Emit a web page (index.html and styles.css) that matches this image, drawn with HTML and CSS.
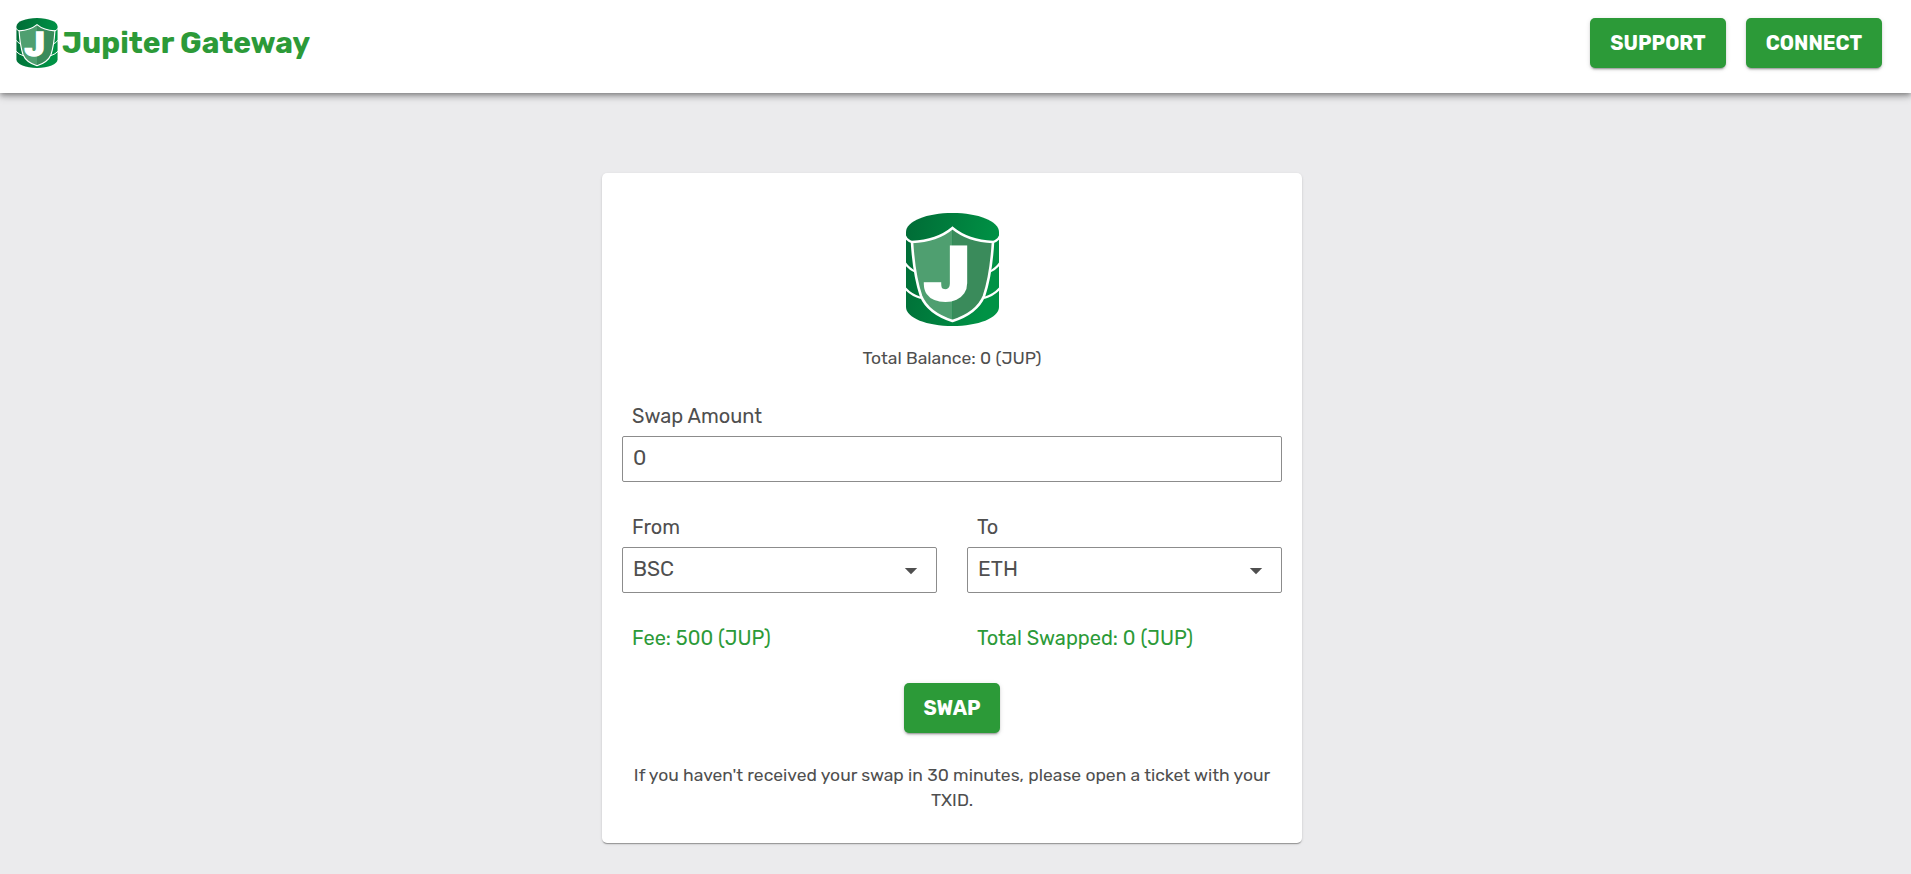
FILE: index.html
```html
<!DOCTYPE html>
<html lang="en">
<head>
<meta charset="utf-8">
<title>Jupiter Gateway</title>
<link rel="stylesheet" href="styles.css">
</head>
<body>
<svg class="defs" width="0" height="0" aria-hidden="true">
  <defs>
    <linearGradient id="barrel" x1="0" y1="0" x2="1" y2="0.25">
      <stop offset="0" stop-color="#006b36"/>
      <stop offset="1" stop-color="#009245"/>
    </linearGradient>
    <symbol id="logo" viewBox="0 0 93 113">
      <path fill="url(#barrel)" d="M0 19C0 8 21 0 46.500 0S93 8 93 19V94C93 105 72 113 46.500 113S0 105 0 94Z"/>
      <g fill="none" stroke="#fff" stroke-width="2.200">
        <path d="M-1 23Q1 28 8 30M-1 50Q3 56 10 59M-1 75Q5 82 15 85"/>
        <path d="M94 23Q92 28 85 30M94 50Q90 56 83 59M94 75Q88 82 78 85"/>
      </g>
      <path fill="#4f9f70" d="M46.500 15Q31 28 6 29Q8 62 15 83Q22 100 46.500 108Z"/>
      <path fill="#3a8b5b" d="M46.500 15Q62 28 87 29Q85 62 78 83Q71 100 46.500 108Z"/>
      <path fill="none" stroke="#fff" stroke-width="2.600" d="M46.500 15Q31 28 6 29Q8 62 15 83Q22 100 46.500 108Q71 100 78 83Q85 62 87 29Q62 28 46.500 15Z"/>
      <text class="logo-letter" transform="translate(18 87) scale(1.090 1)" x="0" y="0">J</text>
    </symbol>
  </defs>
</svg>

<header class="header">
  <div class="brand">
    <svg class="brand-logo"><use href="#logo"/></svg>
    <span class="brand-name">Jupiter Gateway</span>
  </div>
  <nav class="actions">
    <button class="btn btn-nav">Support</button>
    <button class="btn btn-nav">Connect</button>
  </nav>
</header>

<main class="card">
  <svg class="card-logo"><use href="#logo"/></svg>
  <p class="balance">Total Balance: 0 (JUP)</p>
  <div class="field">
    <label class="label">Swap Amount</label>
    <div class="control">0</div>
  </div>
  <div class="row">
    <div class="field">
      <label class="label">From</label>
      <div class="control"><span>BSC</span><svg class="arrow" viewBox="0 0 24 24"><path d="M5.800 9h12.400L12 15.200Z"/></svg></div>
    </div>
    <div class="field">
      <label class="label">To</label>
      <div class="control"><span>ETH</span><svg class="arrow" viewBox="0 0 24 24"><path d="M5.800 9h12.400L12 15.200Z"/></svg></div>
    </div>
  </div>
  <div class="row">
    <p class="total">Fee: 500 (JUP)</p>
    <p class="total">Total Swapped: 0 (JUP)</p>
  </div>
  <button class="btn btn-swap">Swap</button>
  <p class="note">If you haven't received your swap in 30 minutes, please open a ticket with your<br>TXID.</p>
</main>
</body>
</html>
```
FILE: styles.css
```css
* { box-sizing: border-box; }
body {
  margin: 0;
  min-height: 874px;
  background: #ebebed;
  color: #4f4f4f;
  font-family: Rubik, Roboto, sans-serif;
  overflow: hidden;
}
p { margin: 0; }
.defs { display: block; height: 0; }
.header {
  display: flex;
  justify-content: space-between;
  align-items: flex-start;
  height: 93px;
  padding: 18px 29px 0 16px;
  background: #fff;
  box-shadow: 0 2px 4px -1px rgba(0,0,0,.2), 0 4px 5px rgba(0,0,0,.14), 0 1px 10px rgba(0,0,0,.3);
}
.brand { display: flex; align-items: center; gap: 4px; height: 50px; }
.brand-logo { width: 42px; height: 50px; }
.brand-name {
  color: #2c9a38;
  font-size: 30px;
  font-weight: 700;
  white-space: nowrap;
}
.actions { display: flex; gap: 20px; }
.logo-letter {
  fill: #fff;
  stroke: #fff;
  stroke-width: 3px;
  font: 900 75px Roboto, sans-serif;
}
.btn {
  height: 50px;
  padding: 0;
  border: 0;
  border-radius: 5px;
  background: #2c9a38;
  color: #fff;
  font-family: inherit;
  font-size: 20px;
  font-weight: 700;
  text-transform: uppercase;
  box-shadow: 0 3px 1px -2px rgba(0,0,0,.2), 0 2px 2px rgba(0,0,0,.14), 0 1px 5px rgba(0,0,0,.12);
}
.btn-nav { width: 136px; }
.card {
  display: flex;
  flex-direction: column;
  align-items: center;
  width: 700px;
  height: 670px;
  margin: 80px 0 0 602px;
  padding: 40px 20px 0;
  border-radius: 5px;
  background: #fff;
  box-shadow: 0 2px 1px -1px rgba(0,0,0,.2), 0 1px 1px rgba(0,0,0,.14), 0 1px 3px rgba(0,0,0,.12);
}
.card-logo { width: 93px; height: 113px; flex: none; }
.balance { margin-top: 20px; font-size: 17.5px; line-height: 25px; white-space: nowrap; }
.field { display: flex; flex-direction: column; align-self: stretch; flex: 1; }
.card > .field { flex: none; margin-top: 30px; }
.label { padding-left: 10px; font-size: 20px; line-height: 30px; margin-bottom: 5px; }
.control {
  display: flex;
  align-items: center;
  justify-content: space-between;
  height: 46px;
  padding: 0 13px 3px 10px;
  border: 1px solid #8c8c8c;
  border-radius: 2px;
  font-size: 21px;
}
.arrow { width: 24px; height: 24px; margin: 4px 0 0; fill: #4f4f4f; }
.row { display: flex; gap: 30px; align-self: stretch; margin-top: 30px; }
.total { flex: 1; padding-left: 10px; color: #2c9a38; font-size: 20px; line-height: 30px; white-space: nowrap; }
.btn-swap { width: 96px; flex: none; margin-top: 30px; }
.note { margin-top: 30px; font-size: 17.5px; line-height: 25px; text-align: center; white-space: nowrap; }
```
